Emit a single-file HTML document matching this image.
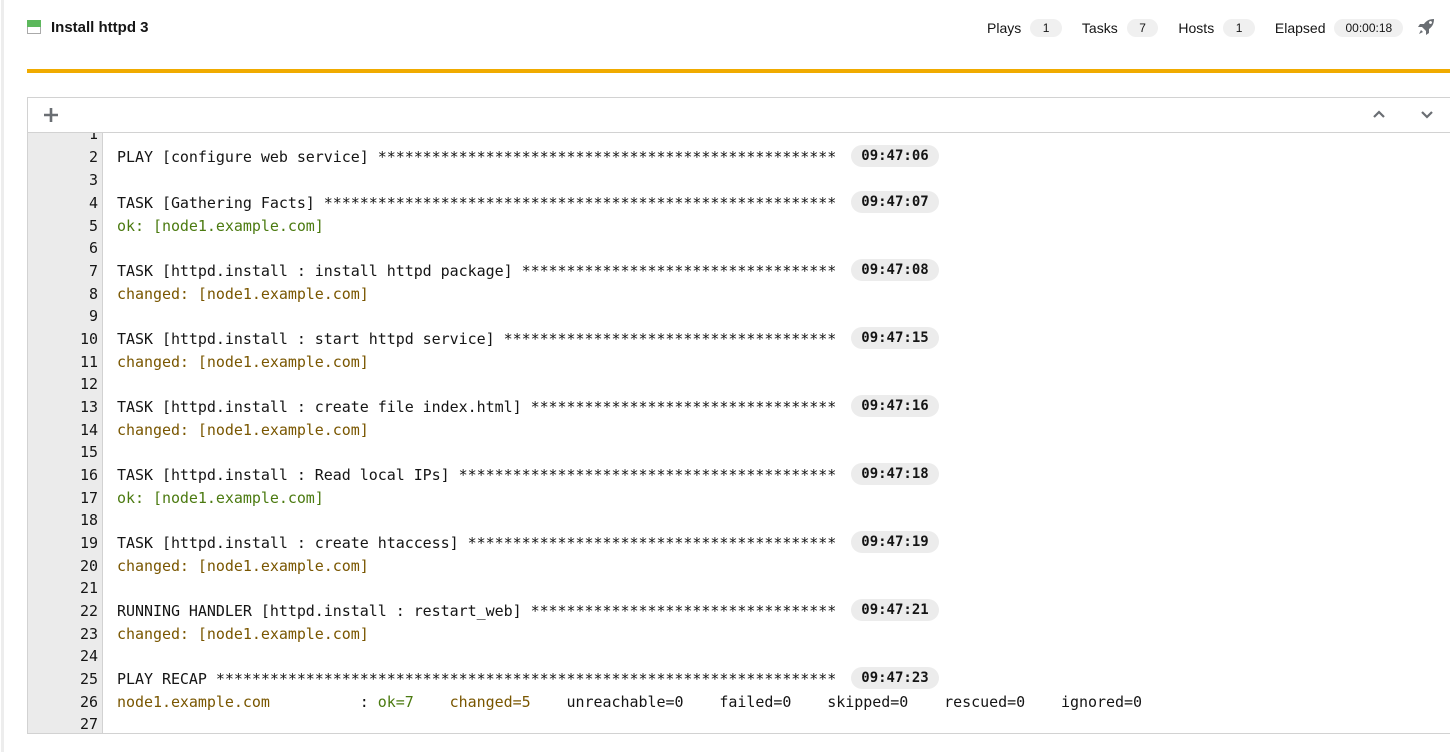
<!DOCTYPE html>
<html><head><meta charset="utf-8"><style>
*{margin:0;padding:0;box-sizing:border-box}
body{width:1450px;height:752px;background:#fff;position:relative;overflow:hidden;font-family:"Liberation Sans",sans-serif;color:#151515}
.lb{position:absolute;left:1px;top:0;width:3px;height:752px;background:#ededed}
.icon{position:absolute;left:27px;top:20px;width:14px;height:14px;border:1px solid #aaa;background:#fff}
.icon:before{content:"";position:absolute;left:-1px;top:-1px;width:14px;height:7px;background:#5cb85c}
.title{position:absolute;left:51px;top:19px;font-size:15px;font-weight:bold}
.stats{position:absolute;top:19px;font-size:14px;display:flex;align-items:center}
.lbl{margin-right:9px}
.pill{background:#f0f0f0;border-radius:10px;height:18px;line-height:18px;font-size:12px;padding:0 12.5px;margin-right:20px}
.bar{position:absolute;left:27px;top:69px;width:1423px;height:4px;background:#f0ab00}
.panel{position:absolute;left:27px;top:97px;width:1423px;height:637px;border:1px solid #d2d2d2;border-right:none;overflow:hidden}
.tb{height:35px;border-bottom:1px solid #d2d2d2;position:relative;background:#fff;z-index:2}
.content{position:absolute;left:0;top:25px;width:100%;height:612px;font-family:"DejaVu Sans Mono",monospace;font-size:15px;letter-spacing:-0.04px}
.gut{position:absolute;left:0;top:0;width:75px;height:620px;background:#ebebeb;border-right:1px solid #d2d2d2}
.ln{position:relative;height:22px;line-height:22px;white-space:pre}
.ln.t{height:24px;line-height:24px}
.n{position:absolute;left:0;width:70px;text-align:right;color:#151515}
.tx{position:absolute;left:89px}
.ok{color:#4b7a10}.ch{color:#795600}
.b{display:inline-block;background:#ececec;border-radius:11px;height:22px;line-height:22px;font-size:14px;font-weight:bold;padding:0 10px;margin-left:15px;vertical-align:top;letter-spacing:0}
</style></head><body>
<div class="lb"></div>
<div class="icon"></div>
<div class="title">Install httpd 3</div>
<div class="stats" style="left:987px"><span class="lbl">Plays</span><span class="pill">1</span><span class="lbl">Tasks</span><span class="pill">7</span><span class="lbl">Hosts</span><span class="pill">1</span><span class="lbl">Elapsed</span><span class="pill" style="margin-right:0;padding:0 11px">00:00:18</span></div>
<svg style="position:absolute;left:1417px;top:18px" width="18" height="18" viewBox="0 0 18 18"><path d="M17 1c-5 0-8 2-10 5H3L1 9h4l4 4v4l3-2v-4c3-2 5-5 5-10zM12 4.5a1.5 1.5 0 1 1 0 .01z" fill="#6a6e73" fill-rule="evenodd"/><path d="M4 12l-2 4 4-2z" fill="#6a6e73"/></svg>
<div class="bar"></div>
<div class="panel">
<div class="tb">
<svg style="position:absolute;left:16px;top:10px" width="14" height="14"><path d="M7 0v14M0 7h14" stroke="#6a6e73" stroke-width="2.6"/></svg>
<svg style="position:absolute;left:1345px;top:12px" width="12" height="10"><path d="M1 7l5-5 5 5" stroke="#6a6e73" stroke-width="2.2" fill="none"/></svg>
<svg style="position:absolute;left:1393px;top:12px" width="12" height="10"><path d="M1 2l5 5 5-5" stroke="#6a6e73" stroke-width="2.2" fill="none"/></svg>
</div>
<div class="content">
<div class="gut"></div>
<div class="ln"><span class="n">1</span></div>
<div class="ln t"><span class="n">2</span><span class="tx">PLAY [configure web service] ***************************************************<span class="b">09:47:06</span></span></div>
<div class="ln"><span class="n">3</span></div>
<div class="ln t"><span class="n">4</span><span class="tx">TASK [Gathering Facts] *********************************************************<span class="b">09:47:07</span></span></div>
<div class="ln"><span class="n">5</span><span class="tx ok">ok: [node1.example.com]</span></div>
<div class="ln"><span class="n">6</span></div>
<div class="ln t"><span class="n">7</span><span class="tx">TASK [httpd.install : install httpd package] ***********************************<span class="b">09:47:08</span></span></div>
<div class="ln"><span class="n">8</span><span class="tx ch">changed: [node1.example.com]</span></div>
<div class="ln"><span class="n">9</span></div>
<div class="ln t"><span class="n">10</span><span class="tx">TASK [httpd.install : start httpd service] *************************************<span class="b">09:47:15</span></span></div>
<div class="ln"><span class="n">11</span><span class="tx ch">changed: [node1.example.com]</span></div>
<div class="ln"><span class="n">12</span></div>
<div class="ln t"><span class="n">13</span><span class="tx">TASK [httpd.install : create file index.html] **********************************<span class="b">09:47:16</span></span></div>
<div class="ln"><span class="n">14</span><span class="tx ch">changed: [node1.example.com]</span></div>
<div class="ln"><span class="n">15</span></div>
<div class="ln t"><span class="n">16</span><span class="tx">TASK [httpd.install : Read local IPs] ******************************************<span class="b">09:47:18</span></span></div>
<div class="ln"><span class="n">17</span><span class="tx ok">ok: [node1.example.com]</span></div>
<div class="ln"><span class="n">18</span></div>
<div class="ln t"><span class="n">19</span><span class="tx">TASK [httpd.install : create htaccess] *****************************************<span class="b">09:47:19</span></span></div>
<div class="ln"><span class="n">20</span><span class="tx ch">changed: [node1.example.com]</span></div>
<div class="ln"><span class="n">21</span></div>
<div class="ln t"><span class="n">22</span><span class="tx">RUNNING HANDLER [httpd.install : restart_web] **********************************<span class="b">09:47:21</span></span></div>
<div class="ln"><span class="n">23</span><span class="tx ch">changed: [node1.example.com]</span></div>
<div class="ln"><span class="n">24</span></div>
<div class="ln t"><span class="n">25</span><span class="tx">PLAY RECAP *********************************************************************<span class="b">09:47:23</span></span></div>
<div class="ln"><span class="n">26</span><span class="tx"><span class="ch">node1.example.com</span>          : <span class="ok">ok=7</span>    <span class="ch">changed=5</span>    unreachable=0    failed=0    skipped=0    rescued=0    ignored=0</span></div>
<div class="ln"><span class="n">27</span></div>
</div>
</div>
</body></html>
